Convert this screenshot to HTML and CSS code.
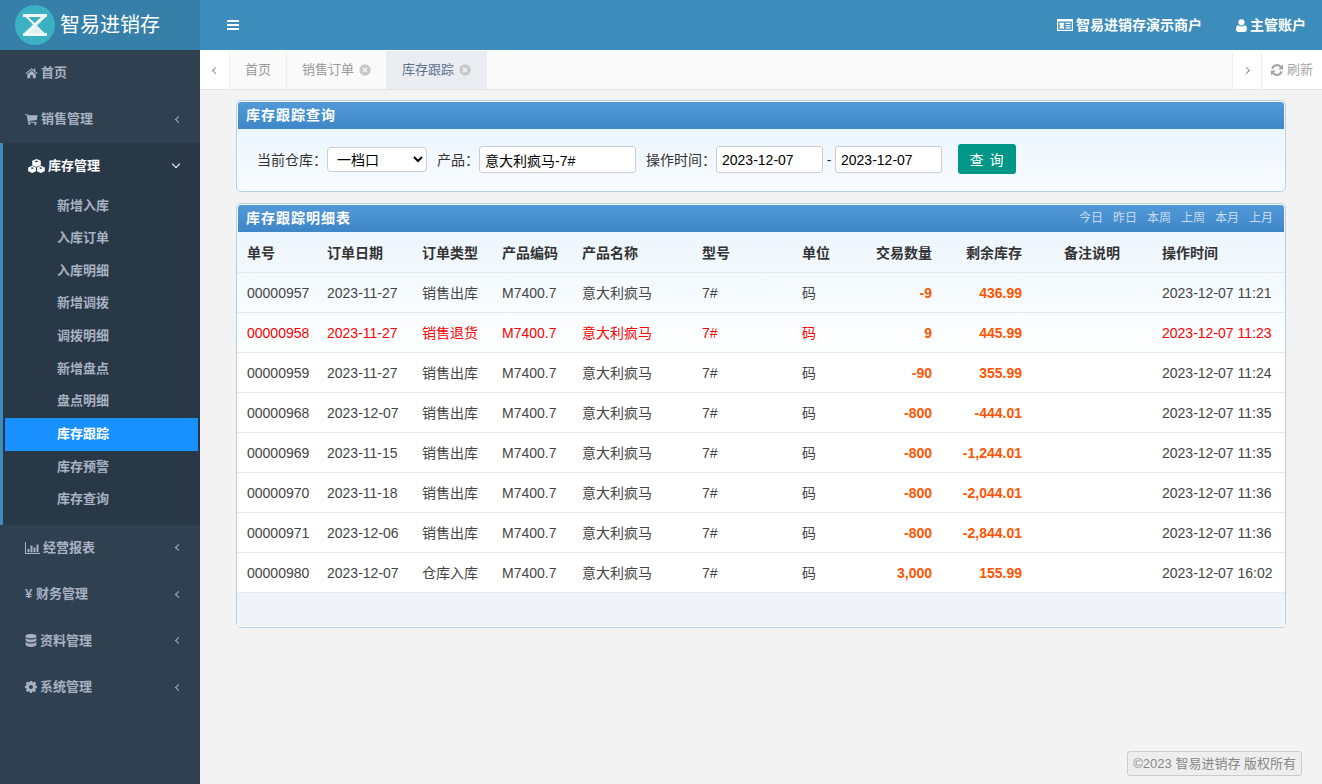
FILE: index.html
```html
<!DOCTYPE html>
<html lang="zh-CN">
<head>
<meta charset="utf-8">
<title>库存跟踪</title>
<link rel="stylesheet" href="styles.css">
</head>
<body>
<svg class="defs" aria-hidden="true">
  <symbol id="i-home" viewBox="0 0 14 12"><path d="M7 .8.4 6.3l.8.9L7 2.4l5.8 4.8.8-.9-2.5-2.1V1.2H9.7v1.700zM2.400 7.400 7 3.600l4.600 3.800v4.200H8.400V8.400H5.600v3.200H2.400z"/></symbol>
  <symbol id="i-cart" viewBox="0 0 14 13"><path d="M0 1h2.600l.4 1.400h10.800l-1.100 5.200-8.200 1 .3 1h8v1H3.400L1.700 2H0z"/><circle cx="4.600" cy="11.800" r="1.200"/><circle cx="11.200" cy="11.800" r="1.200"/></symbol>
  <symbol id="i-cubes" viewBox="0 0 17 14"><path d="M8.500 0 12.800 1.800V6.200L8.500 8 4.200 6.200V1.800zM8.500 1.600 6.600 2.400 8.500 3.200 10.400 2.400zM4.200 6.800 8 8.400V12.300L4.200 14 .2 12.300V8.400zM4.200 8.300 2.400 9.100 4.200 9.900 6 9.100zM12.800 6.800 16.800 8.400V12.300L12.800 14 9 12.300V8.400zM12.800 8.300 11 9.100 12.800 9.900 14.600 9.100z" fill-rule="evenodd"/></symbol>
  <symbol id="i-chart" viewBox="0 0 15 12"><path d="M0 0h1v11h14v1H0zM2.500 7h2v3.300h-2zM5.500 3.500h2v6.800h-2zM8.500 5.500h2v4.800h-2zM11.500 2.500h2v7.800h-2z"/></symbol>
  <symbol id="i-db" viewBox="0 0 12 14"><ellipse cx="6" cy="2.300" rx="5.800" ry="2.300"/><path d="M.2 4c1 1.300 3.300 2 5.800 2s4.800-.7 5.800-2v2.800C11.800 8.100 9.200 9 6 9S.2 8.100.2 6.800zM.2 8.300c1 1.300 3.300 2 5.800 2s4.800-.7 5.800-2v3.300C11.800 12.900 9.200 14 6 14S.2 12.900.2 11.600z"/></symbol>
  <symbol id="i-cog" viewBox="0 0 12 12"><path fill-rule="evenodd" d="M4.900 0h2.200l.3 1.600 1-.4L9.700.6l1.500 1.600-1 1.300.4 1 1.400.4v2.200l-1.400.3-.4 1 .9 1.300-1.600 1.500-1.300-.9-1 .4L7.100 12H4.900l-.3-1.400-1-.4-1.300.9L.8 9.500l.9-1.300-.4-1L0 7V4.900l1.300-.3.4-1L.8 2.200 2.300.6l1.300 1 1-.4zM6 4a2 2 0 1 0 0 4 2 2 0 0 0 0-4z"/></symbol>
  <symbol id="i-card" viewBox="0 0 16 12"><path fill-rule="evenodd" d="M0 0h16v12H0zM1.200 2.600v8.200h13.600V2.600zM2.500 3.800h4.600v2.600H6v.8h1.100v2.400H2.500V7.200h1.100v-.8H2.500zM8.500 3.800h5v1.300h-5zM8.500 6h5v1.300h-5zM8.500 8.200h5v1.400h-5z"/></symbol>
  <symbol id="i-user" viewBox="0 0 11 13"><circle cx="5.500" cy="3.300" r="3.100"/><path d="M2.200 6.200c.9.800 2 1.200 3.300 1.200s2.400-.4 3.300-1.200c1.400.2 2.100 1.500 2.100 4.300 0 1.500-1 2.400-2.300 2.400H2.400C1 12.900 0 12 0 10.500c0-2.800.8-4.100 2.200-4.300z"/></symbol>
  <symbol id="i-refresh" viewBox="0 0 12 12"><path d="M12 .6V5.400H7.200L9 3.600A3.700 3.700 0 0 0 2.500 5L.3 4.600A5.900 5.900 0 0 1 10.500 2.100zM0 11.400V6.600h4.800L3 8.400A3.700 3.700 0 0 0 9.500 7l2.200.4A5.900 5.900 0 0 1 1.500 9.900z"/></symbol>
  <symbol id="i-close" viewBox="0 0 12 12"><circle cx="6" cy="6" r="5.700" fill="#c8c8c8"/><path d="M4 4l4 4M8 4l-4 4" stroke="#f4f4f4" stroke-width="1.600" fill="none"/></symbol>
</svg>

<header class="topbar">
  <div class="brand">
    <svg class="brand-logo" viewBox="0 0 40 40">
      <circle cx="20" cy="20" r="20" fill="#3cb1c3"/>
      <path d="M20 21 27 28H13z" fill="#dfeeee"/>
      <path d="M11 11 29.500 29.500" stroke="#eef6f6" stroke-width="2" fill="none"/>
      <path d="M29.500 11 10 29.500" stroke="#eef6f6" stroke-width="3.200" fill="none"/>
      <path d="M8 9h24v3H8zM8 28h24v3H8z" fill="#f0f7f7"/>
    </svg>
    <span class="brand-name">智易进销存</span>
  </div>
  <div class="topnav">
    <button class="burger" aria-label="菜单"><span></span><span></span><span></span></button>
    <div class="topnav-right">
      <span class="topnav-item"><svg class="ico-card"><use href="#i-card"/></svg>智易进销存演示商户</span>
      <span class="topnav-item"><svg class="ico-user"><use href="#i-user"/></svg>主管账户</span>
    </div>
  </div>
</header>

<div class="layout">
  <aside class="sidebar">
    <a class="menu"><span class="menu-label"><svg class="mi mi-home"><use href="#i-home"/></svg>首页</span></a>
    <a class="menu"><span class="menu-label"><svg class="mi mi-home"><use href="#i-cart"/></svg>销售管理</span><i class="chev-left"></i></a>
    <div class="section">
      <a class="menu menu-open"><span class="menu-label"><svg class="mi mi-cubes"><use href="#i-cubes"/></svg>库存管理</span><i class="chev-down"></i></a>
      <a class="sub">新增入库</a>
      <a class="sub">入库订单</a>
      <a class="sub">入库明细</a>
      <a class="sub">新增调拨</a>
      <a class="sub">调拨明细</a>
      <a class="sub">新增盘点</a>
      <a class="sub">盘点明细</a>
      <a class="sub sub-active">库存跟踪</a>
      <a class="sub">库存预警</a>
      <a class="sub">库存查询</a>
    </div>
    <a class="menu"><span class="menu-label"><svg class="mi mi-chart"><use href="#i-chart"/></svg>经营报表</span><i class="chev-left"></i></a>
    <a class="menu"><span class="menu-label"><span class="yen">¥</span>财务管理</span><i class="chev-left"></i></a>
    <a class="menu"><span class="menu-label"><svg class="mi mi-db"><use href="#i-db"/></svg>资料管理</span><i class="chev-left"></i></a>
    <a class="menu"><span class="menu-label"><svg class="mi mi-cog"><use href="#i-cog"/></svg>系统管理</span><i class="chev-left"></i></a>
  </aside>

  <main class="content">
    <nav class="tabbar">
      <span class="tab-arrow"><i class="arrow-left"></i></span>
      <span class="tab">首页</span>
      <span class="tab">销售订单<svg class="tab-close"><use href="#i-close"/></svg></span>
      <span class="tab tab-active">库存跟踪<svg class="tab-close"><use href="#i-close"/></svg></span>
      <span class="tab-fill"></span>
      <span class="tab-arrow tab-arrow-r"><i class="arrow-right"></i></span>
      <span class="tab-refresh"><svg class="ico-refresh"><use href="#i-refresh"/></svg>刷新</span>
    </nav>

    <div class="page">
      <section class="panel">
        <h2 class="panel-head">库存跟踪查询</h2>
        <form class="query">
          <label class="q-label">当前仓库：</label>
          <select class="q-select"><option>一档口</option></select>
          <label class="q-label q-gap">产品：</label>
          <input class="q-input q-product" value="意大利疯马-7#">
          <label class="q-label q-gap">操作时间：</label>
          <input class="q-input q-date" value="2023-12-07">
          <span class="q-dash">-</span>
          <input class="q-input q-date" value="2023-12-07">
          <button class="q-btn" type="button">查 询</button>
        </form>
      </section>

      <section class="panel panel-list">
        <h2 class="panel-head panel-head-split">库存跟踪明细表
          <span class="quick"><a>今日</a><a>昨日</a><a>本周</a><a>上周</a><a>本月</a><a>上月</a></span>
        </h2>
        <div class="table-wrap">
          <table class="grid">
            <colgroup>
              <col class="c80"><col class="c95"><col class="c80"><col class="c80"><col class="c120"><col class="c100"><col class="c60"><col class="c90"><col class="c90"><col class="c120"><col>
            </colgroup>
            <thead>
              <tr><th>单号</th><th>订单日期</th><th>订单类型</th><th>产品编码</th><th>产品名称</th><th>型号</th><th>单位</th><th class="r">交易数量</th><th class="r">剩余库存</th><th class="c">备注说明</th><th>操作时间</th></tr>
            </thead>
            <tbody>
              <tr><td>00000957</td><td>2023-11-27</td><td>销售出库</td><td>M7400.7</td><td>意大利疯马</td><td>7#</td><td>码</td><td class="r n">-9</td><td class="r n">436.99</td><td></td><td>2023-12-07 11:21</td></tr>
              <tr class="red"><td>00000958</td><td>2023-11-27</td><td>销售退货</td><td>M7400.7</td><td>意大利疯马</td><td>7#</td><td>码</td><td class="r n">9</td><td class="r n">445.99</td><td></td><td>2023-12-07 11:23</td></tr>
              <tr><td>00000959</td><td>2023-11-27</td><td>销售出库</td><td>M7400.7</td><td>意大利疯马</td><td>7#</td><td>码</td><td class="r n">-90</td><td class="r n">355.99</td><td></td><td>2023-12-07 11:24</td></tr>
              <tr><td>00000968</td><td>2023-12-07</td><td>销售出库</td><td>M7400.7</td><td>意大利疯马</td><td>7#</td><td>码</td><td class="r n">-800</td><td class="r n">-444.01</td><td></td><td>2023-12-07 11:35</td></tr>
              <tr><td>00000969</td><td>2023-11-15</td><td>销售出库</td><td>M7400.7</td><td>意大利疯马</td><td>7#</td><td>码</td><td class="r n">-800</td><td class="r n">-1,244.01</td><td></td><td>2023-12-07 11:35</td></tr>
              <tr><td>00000970</td><td>2023-11-18</td><td>销售出库</td><td>M7400.7</td><td>意大利疯马</td><td>7#</td><td>码</td><td class="r n">-800</td><td class="r n">-2,044.01</td><td></td><td>2023-12-07 11:36</td></tr>
              <tr><td>00000971</td><td>2023-12-06</td><td>销售出库</td><td>M7400.7</td><td>意大利疯马</td><td>7#</td><td>码</td><td class="r n">-800</td><td class="r n">-2,844.01</td><td></td><td>2023-12-07 11:36</td></tr>
              <tr><td>00000980</td><td>2023-12-07</td><td>仓库入库</td><td>M7400.7</td><td>意大利疯马</td><td>7#</td><td>码</td><td class="r n">3,000</td><td class="r n">155.99</td><td></td><td>2023-12-07 16:02</td></tr>
            </tbody>
          </table>
          <div class="table-foot"></div>
        </div>
      </section>
    </div>

    <footer class="copyright">©2023 智易进销存 版权所有</footer>
  </main>
</div>
</body>
</html>
```
FILE: styles.css
```css
* { box-sizing: border-box; }
html, body { margin: 0; height: 100%; }
body {
  display: flex;
  flex-direction: column;
  height: 784px;
  overflow: hidden;
  background: #f3f3f4;
  color: #333;
  font: 14px/20px "Liberation Sans", "Noto Sans CJK SC", sans-serif;
}
.defs { display: none; }
svg { fill: currentColor; flex: none; }
a { color: inherit; text-decoration: none; }

/* top bar */
.topbar { display: flex; height: 50px; flex: none; background: #3c8dbc; color: #fff; }
.brand { width: 200px; display: flex; align-items: center; padding-left: 15px; background: #367fa9; }
.brand-logo { width: 40px; height: 40px; }
.brand-name { margin-left: 5px; font-size: 20px; line-height: 24px; }
.topnav { flex: 1; display: flex; align-items: center; justify-content: space-between; padding: 0 16px 0 27px; }
.burger { display: flex; flex-direction: column; gap: 2px; width: 12px; padding: 0; border: 0; background: none; }
.burger span { display: block; height: 2px; width: 12px; background: #fff; }
.topnav-right { display: flex; gap: 34px; }
.topnav-item { display: flex; align-items: center; font-weight: bold; font-size: 14px; }
.ico-card { width: 16px; height: 12px; margin-right: 3px; }
.ico-user { width: 11px; height: 13px; margin-right: 3px; }

/* layout */
.layout { flex: 1; display: flex; min-height: 0; }
.sidebar { width: 200px; flex: none; background: #2f4050; color: #a7b1c2; font-size: 13px; font-weight: bold; }
.menu { display: flex; align-items: center; justify-content: space-between; height: 46.5px; padding: 0 19px 1px 25px; }
.menu-label { display: flex; align-items: center; }
.mi { margin-right: 3px; height: 12px; width: 13px; }
.mi-home { width: 13px; height: 12px; }
.mi-chart { width: 15px; height: 12px; margin-right: 3px; }
.mi-db { width: 12px; height: 13px; }
.mi-cog { width: 12px; height: 12px; }
.mi-cubes { width: 17px; height: 14px; margin-right: 3px; }
.yen { width: 11px; font-size: 13px; }
.chev-left { width: 5px; height: 5px; border-left: 1.4px solid #a7b1c2; border-bottom: 1.4px solid #a7b1c2; transform: rotate(45deg); }
.chev-down { width: 6px; height: 6px; margin-right: 2px; margin-top: -3px; border-right: 1.5px solid #fff; border-bottom: 1.5px solid #fff; transform: rotate(45deg); }

.section { background: #293846; border-left: 3px solid #3c8dbc; padding-bottom: 9px; }
.menu-open { color: #fff; }
.sub { display: block; height: 32.67px; line-height: 32.67px; padding-left: 52px; margin: 0 2px; }
.sub-active { background: #1890ff; color: #fff; }

/* content */
.content { flex: 1; min-width: 0; display: flex; flex-direction: column; }
.tabbar { display: flex; height: 40px; flex: none; background: #fafafa; border-top: 1px solid #fff; border-bottom: 1px solid #e4e4e4; font-size: 13px; color: #999; }
.tab-arrow { width: 30px; display: flex; align-items: center; justify-content: center; background: #fff; border-right: 1px solid #eee; padding-left: 1px; }
.tab-arrow-r { border-left: 1px solid #eee; padding: 0 2px 0 0; }
.arrow-left, .arrow-right { width: 5px; height: 5px; border-left: 1px solid #8a9099; border-bottom: 1px solid #8a9099; transform: rotate(45deg); }
.arrow-right { transform: rotate(225deg); }
.tab { display: flex; align-items: center; gap: 5px; padding: 0 15px; border-right: 1px solid #eee; }
.tab-active { background: #e9edf2; color: #60718a; border-right: 1px solid #e9edf2; }
.tab-close { width: 12px; height: 12px; }
.tab-fill { flex: 1; }
.tab-refresh { width: 60px; display: flex; align-items: center; padding-left: 9px; background: #fff; color: #a6a6a6; }
.ico-refresh { width: 12px; height: 12px; margin-right: 4px; }

.page { flex: 1; padding: 10px 36px 0; display: flex; flex-direction: column; gap: 11px; min-height: 0; }
.panel { border: 1px solid #b5d0e6; border-radius: 5px; padding: 1px; background: #fff; }
.panel-head {
  margin: 0;
  height: 27px;
  padding-left: 8px;
  border-radius: 3px 3px 0 0;
  background: linear-gradient(#5199d7, #3f86c8);
  color: #fff;
  font-size: 14px;
  font-weight: bold;
  line-height: 26px;
  letter-spacing: 1px;
}
.panel-head-split { display: flex; justify-content: space-between; }
.quick { display: flex; gap: 10px; padding-right: 11px; font-size: 12px; font-weight: normal; letter-spacing: 0; color: #c7dbf0; }

.query {
  display: flex;
  align-items: center;
  height: 61px;
  padding-left: 19px;
  background: linear-gradient(#ecf6fd, #f8fbff);
}
.q-label { white-space: nowrap; }
.q-gap { margin-left: 10px; }
.q-select { width: 100px; height: 25px; padding: 0 0 0 5px; border: 1px solid #ccc; border-radius: 4px; background: #fff; color: #000; font: 14px "Liberation Sans", "Noto Sans CJK SC", sans-serif; }
.q-input { height: 27px; padding: 0 5px; border: 1px solid #ccc; border-radius: 3px; background: #fff; color: #000; font: 14px "Liberation Sans", "Noto Sans CJK SC", sans-serif; }
.q-product { width: 157px; }
.q-date { width: 107px; }
.q-dash { width: 12px; text-align: center; }
.q-btn { width: 58px; height: 30px; margin: -2px 0 0 16px; border: 0; border-radius: 3px; background: #009688; color: #fff; font: 14px "Liberation Sans", "Noto Sans CJK SC", sans-serif; letter-spacing: 1px; }

.table-wrap { margin: 0 -1px; background: #fff linear-gradient(#edf6fd, #fff) no-repeat 0 0 / 100% 125px; }
.grid { width: 100%; table-layout: fixed; border-collapse: collapse; color: #444; }
.c60 { width: 60px; }
.c80 { width: 80px; }
.c90 { width: 90px; }
.c95 { width: 95px; }
.c100 { width: 100px; }
.c120 { width: 120px; }
.grid tr { height: 40px; border-bottom: 1px solid #e7eaec; }
.grid th, .grid td { padding: 2px 10px 0; text-align: left; white-space: nowrap; font-size: 14px; }
.grid th { color: #333; font-weight: bold; }
.grid .r { text-align: right; }
.grid .c { text-align: center; }
.red td { color: #f00; }
.grid .n { color: #ff5500; font-weight: bold; }
.table-foot { height: 33px; background: #f0f4fa; border-radius: 0 0 4px 4px; }

.copyright {
  align-self: flex-end;
  margin: 0 20px 8px 0;
  height: 25px;
  padding: 0 5px;
  border: 1px solid #ccc;
  border-radius: 3px;
  background: #eee;
  color: #888;
  font-size: 13px;
  line-height: 24px;
}
```
